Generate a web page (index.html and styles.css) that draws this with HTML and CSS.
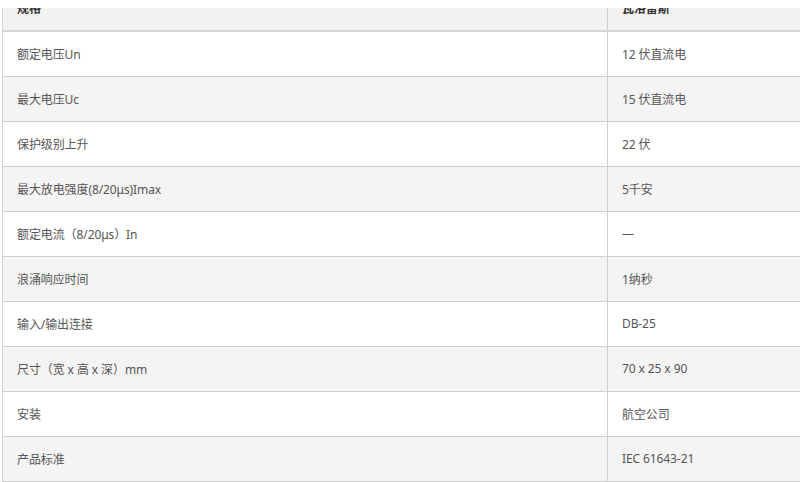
FILE: index.html
```html
<!DOCTYPE html>
<html lang="zh">
<head>
<meta charset="utf-8">
<link rel="stylesheet" href="styles.css">
</head>
<body>
<div class="topbar"></div>
<div class="wrap">
<table class="spec">
<thead>
<tr><th class="c1">规格</th><th class="c2">瓦洛雷斯</th></tr>
</thead>
<tbody>
<tr><td>额定电压Un</td><td>12 伏直流电</td></tr>
<tr><td>最大电压Uc</td><td>15 伏直流电</td></tr>
<tr><td>保护级别上升</td><td>22 伏</td></tr>
<tr><td>最大放电强度(8/20μs)Imax</td><td>5千安</td></tr>
<tr><td>额定电流（8/20μs）In</td><td>—</td></tr>
<tr><td>浪涌响应时间</td><td>1纳秒</td></tr>
<tr><td>输入/输出连接</td><td>DB-25</td></tr>
<tr><td>尺寸（宽 x 高 x 深）mm</td><td>70 x 25 x 90</td></tr>
<tr><td>安装</td><td>航空公司</td></tr>
<tr><td>产品标准</td><td>IEC 61643-21</td></tr>
</tbody>
</table>
</div>
</body>
</html>
```

FILE: styles.css
```css
html, body {
  margin: 0;
  padding: 0;
  background: #fff;
  overflow: hidden;
}
body {
  width: 800px;
  height: 482px;
  font-family: "Noto Sans", "Noto Sans CJK SC", sans-serif;
  font-size: 12px;
  color: #555;
}
.topbar {
  position: fixed;
  top: 0;
  left: 0;
  right: 0;
  height: 8px;
  background: #fff;
  z-index: 2;
}
.wrap {
  margin-top: -14px;
  padding-left: 2px;
  width: 798px;
  overflow: hidden;
}
.spec {
  border-collapse: collapse;
  width: 798px;
  table-layout: fixed;
  border-left: 1px solid #d4d4d4;
}
.spec th, .spec td {
  height: 44px;
  padding: 0 0 0 14px;
  text-align: left;
  vertical-align: middle;
  border-bottom: 1px solid #cfcfcf;
  box-sizing: border-box;
  white-space: nowrap;
  letter-spacing: -0.1px;
}
.spec th {
  font-weight: bold;
  color: #333;
  background: #f2f2f2;
  border-bottom: 2px solid #d6d6d6;
  height: 45px;
}
.spec .c1 { width: 605px; }
.spec th:first-child, .spec td:first-child {
  border-right: 1px solid #cfcfcf;
}
.spec tbody tr:nth-child(odd) td { background: #fff; }
.spec tbody tr:nth-child(even) td { background: #f4f4f4; }
.spec tbody tr td { height: 45px; }
```
